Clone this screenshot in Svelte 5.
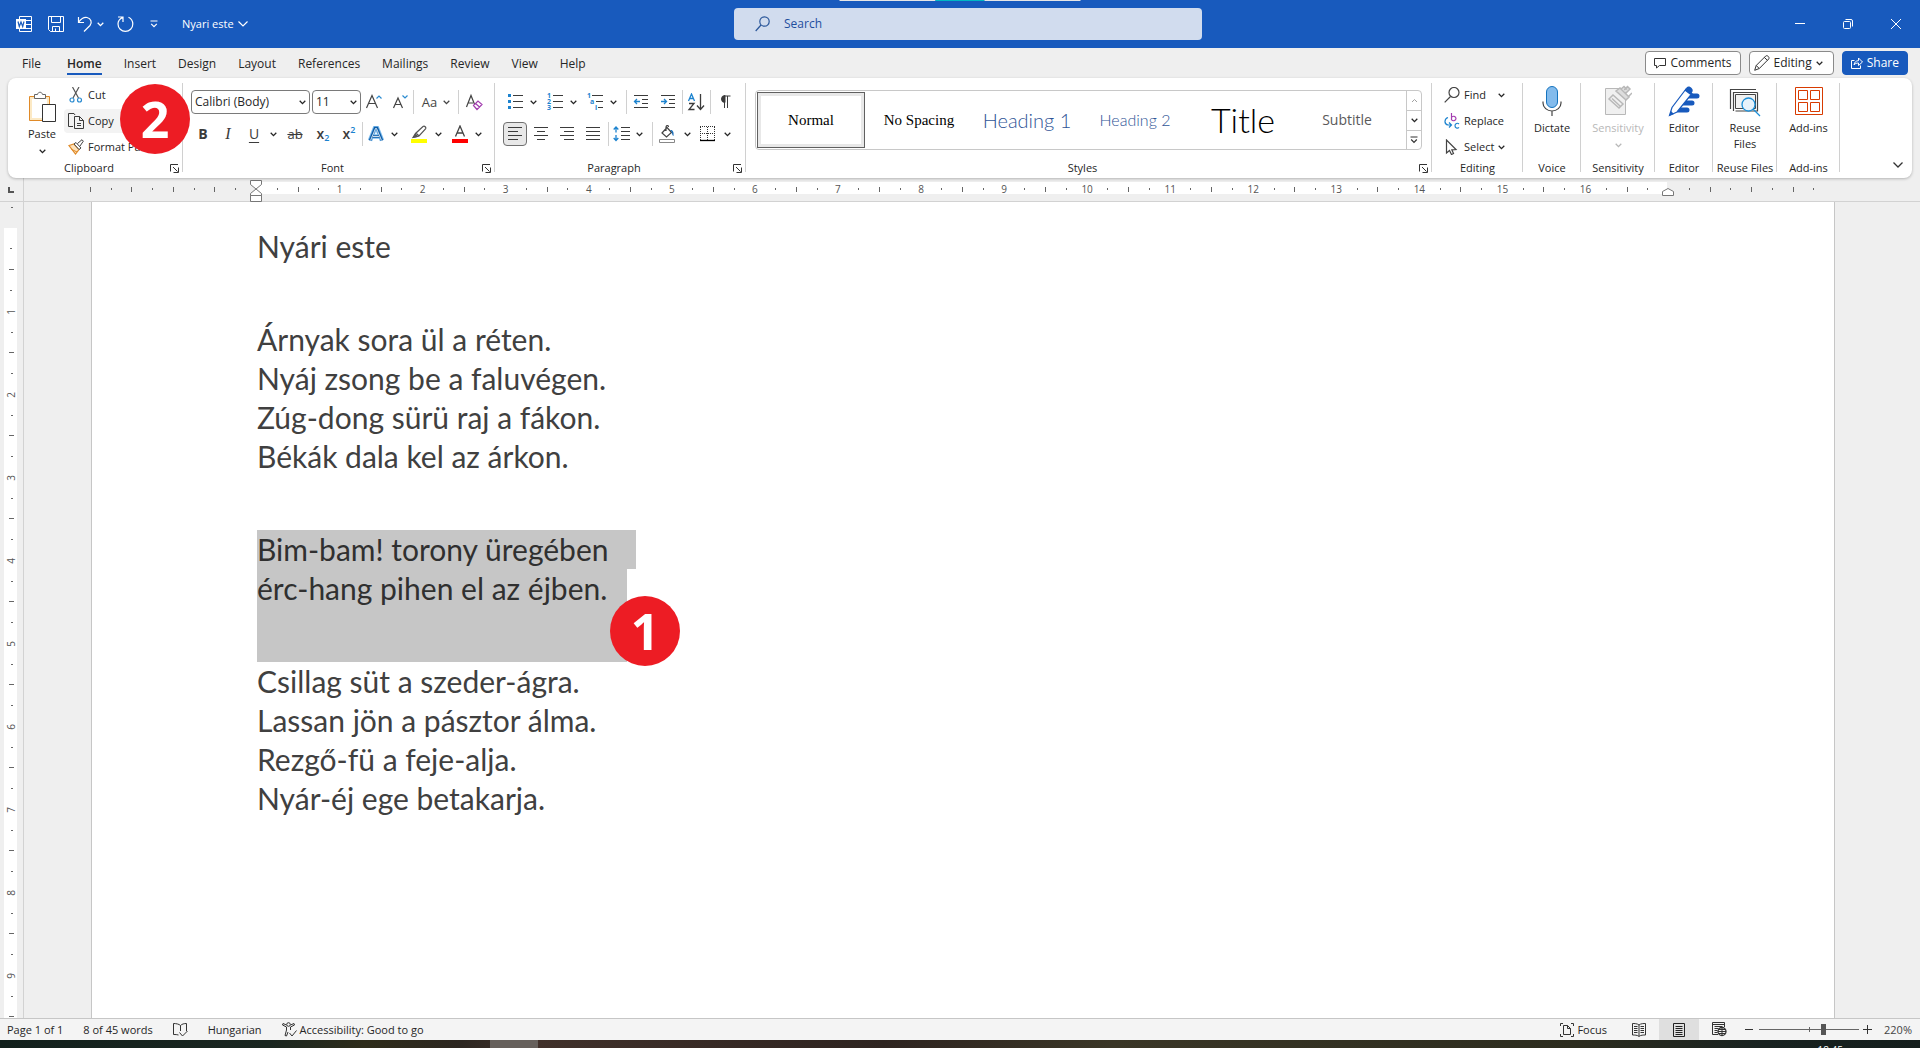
<script>
  const tabs = ['File', 'Home', 'Insert', 'Design', 'Layout', 'References', 'Mailings', 'Review', 'View', 'Help'];
  const styles = [
    { name: 'Normal', kind: 'serif' },
    { name: 'No Spacing', kind: 'serif' },
    { name: 'Heading 1', kind: 'h1' },
    { name: 'Heading 2', kind: 'h2' },
    { name: 'Title', kind: 'title' },
    { name: 'Subtitle', kind: 'subtitle' }
  ];
  // Quarter-unit marks of the horizontal ruler, zero being the left indent.
  const lastMark = 68;
  const marks = Array.from({ length: 84 }, (_, i) => i - 8);
  const units = Array.from({ length: 10 }, (_, i) => i);

  function markKind(k) {
    if (k === 0 || k === lastMark) return 'none';
    if (k % 4 === 0 && k > 0 && k < lastMark) return 'number';
    return k % 2 === 0 ? 'line' : 'dot';
  }

  const verse1 = ['Árnyak sora ül a réten.', 'Nyáj zsong be a faluvégen.', 'Zúg-dong sürü raj a fákon.', 'Békák dala kel az árkon.'];
  const verse3 = ['Csillag süt a szeder-ágra.', 'Lassan jön a pásztor álma.', 'Rezgő-fü a feje-alja.', 'Nyár-éj ege betakarja.'];

  let active = $state('Home');
  let picked = $state('Normal');
  let zoom = $state(65);
</script>

{#snippet caret()}
  <svg class="caret" width="7" height="5" viewBox="0 0 7 5"><path d="M.7 .8 3.5 3.6 6.3 .8" fill="none" stroke="currentColor" stroke-width="1.3" /></svg>
{/snippet}

{#snippet dropdown(label)}
  <button class="drop" aria-label={label}>{@render caret()}</button>
{/snippet}

{#snippet groupLabel(text, launcher)}
  <div class="group-label">
    <span>{text}</span>
    {#if launcher}
      <button class="launcher" aria-label="{text} settings">
        <svg width="9" height="9" viewBox="0 0 9 9" fill="none" stroke="#333"><path d="M.5 7.5V.5H8M3 3l4.5 4.5M8.5 3.5v5h-5" /></svg>
      </button>
    {/if}
  </div>
{/snippet}

{#snippet lines(widths, align)}
  <svg width="16" height="16" viewBox="0 0 16 16" stroke="#3b3b3b">
    {#each widths as w, i}
      {@const x = align === 'left' ? 1 : align === 'right' ? 15 - w : 8 - w / 2}
      <path d="M{x} {1.5 + i * 4}h{w}" />
    {/each}
  </svg>
{/snippet}

<div class="app">
  <header class="titlebar">
    <div class="screen-edge"><i></i><i class="teal"></i><i></i></div>
    <div class="quick">
      <svg class="word" width="16" height="16" viewBox="0 0 16 16" fill="none" stroke="#fff">
        <path d="M3.5 3V.5h12v15h-12V13M10 4.5h5.5M10 8.5h5.5M10 12.5h5.5" />
        <path d="M0 3h10v10H0z" fill="#fff" stroke="none" />
        <path d="M2 5.500l1.300 5L5 6l1.700 4.500L8 5.500" stroke="#185abd" stroke-width="1.200" />
      </svg>
      <button aria-label="Save">
        <svg width="16" height="16" viewBox="0 0 16 16" fill="none" stroke="#fff"><path d="M.5 .5h15v15H2.500L.5 13.500zM3.500 .5v6h9v-6M4.500 15.500v-5h7v5M7.500 12.500v3" /></svg>
      </button>
      <button class="undo" aria-label="Undo">
        <svg width="16" height="16" viewBox="0 0 16 16" fill="none" stroke="#fff" stroke-width="1.200"><path d="M1.500 1v5.500H7M1.800 6C4 3 7 1 10 1.500c4 .8 5.500 5 3 8L7 15.500" /></svg>
        {@render caret()}
      </button>
      <button aria-label="Redo">
        <svg width="17" height="16" viewBox="0 0 17 16" fill="none" stroke="#fff" stroke-width="1.200"><path d="M1 1h5v5M5.500 1.500C2.500 3 1 5 1 8a7.300 7.300 0 0 0 14.800 0c0-3-1.600-5.500-4.300-6.800" /></svg>
      </button>
      <button aria-label="Customize Quick Access Toolbar">
        <svg width="8" height="8" viewBox="0 0 8 8" fill="none" stroke="#fff" stroke-width="1.200"><path d="M.5 1h7M1.200 3.800 4 6.600l2.800-2.800" /></svg>
      </button>
    </div>
    <button class="doc-name">Nyari este
      <svg width="10" height="6" viewBox="0 0 10 6" fill="none" stroke="#fff" stroke-width="1.200"><path d="M.5 .5 5 5 9.500 .5" /></svg>
    </button>
    <label class="search">
      <svg width="15" height="16" viewBox="0 0 15 16" fill="none" stroke="#2b579a" stroke-width="1.200"><circle cx="9.500" cy="5.500" r="4.700" /><path d="M6 9 .7 15" /></svg>
      <input type="text" placeholder="Search" aria-label="Search" />
    </label>
    <div class="window-buttons">
      <button aria-label="Minimize"><svg width="10" height="10" viewBox="0 0 10 10" stroke="#fff"><path d="M0 4.500h10" /></svg></button>
      <button aria-label="Restore"><svg width="10" height="10" viewBox="0 0 10 10" fill="none" stroke="#fff"><rect x=".5" y="2.500" width="7" height="7" rx="1" /><path d="M2.500 .5H8A1.500 1.500 0 0 1 9.500 2v5.500" /></svg></button>
      <button aria-label="Close"><svg width="10" height="10" viewBox="0 0 10 10" stroke="#fff"><path d="M0 0l10 10M10 0 0 10" /></svg></button>
    </div>
  </header>

  <nav class="tabs">
    <div class="tab-list">
      {#each tabs as tab}
        <button class="tab" class:active={active === tab} onclick={() => (active = tab)}>{tab}</button>
      {/each}
    </div>
    <div class="actions">
      <button class="action">
        <svg width="12" height="12" viewBox="0 0 12 12" fill="none" stroke="#333"><path d="M.5 1.500h11v7h-6l-3 2.500v-2.500h-2z" /></svg>
        Comments
      </button>
      <button class="action">
        <svg width="16" height="16" viewBox="0 0 16 16" fill="none" stroke="#333"><path d="M.7 15.300 2.200 10.500 11.700 1c1.500-1.200 4.300 1.200 3 3L5.300 13.500zM2.200 10.500l3.100 3M10.300 2.400l3.200 3" /></svg>
        Editing {@render caret()}
      </button>
      <button class="action share">
        <svg width="12" height="12" viewBox="0 0 12 12" fill="none" stroke="#fff"><path d="M3.500 3.500h-3v8h9v-3M3 8c.5-3 2-4.300 4.500-4.300V1l4 4-4 3.500V6C5.500 6 4 6.500 3 8z" /></svg>
        Share
      </button>
    </div>
  </nav>

  <section class="ribbon" aria-label="Home ribbon">
    <div class="group clipboard">
      <div class="stack-row">
        <button class="big paste">
          <svg width="28" height="32" viewBox="0 0 28 32" fill="none">
            <path d="M1.500 5.500h20v24h-20z" fill="#fce9c4" stroke="#e08a28" />
            <path d="M4 8h15v19H4z" fill="#fff" />
            <path d="M6.500 7.500v-4h3c.5-3 4.500-3 5 0h3v4z" fill="#fff" stroke="#666" />
            <path d="M14.500 13.500h13v17h-13z" fill="#fff" stroke="#333" />
          </svg>
          <span>Paste</span>
          {@render caret()}
        </button>
        <div class="stack">
          <button class="small">
            <svg width="16" height="16" viewBox="0 0 16 16" fill="none"><path d="M4.500 0 10.500 11M11 0 5 11" stroke="#555" stroke-width="1.200" /><circle cx="4" cy="13" r="2" stroke="#2b8bd0" stroke-width="1.200" /><circle cx="11.500" cy="13" r="2" stroke="#2b8bd0" stroke-width="1.200" /></svg>
            Cut
          </button>
          <button class="small hovered">
            <svg width="16" height="16" viewBox="0 0 16 16" fill="none" stroke="#3b3b3b"><path d="M5 13.500H.5V.5H6L7 2M6.500 3.500h5l4 4v8h-9zM11.500 3.500v4h4M9 10.500h4M9 12.500h4" /></svg>
            Copy
          </button>
          <button class="small">
            <svg width="16" height="16" viewBox="0 0 16 16" fill="none"><path d="M1 6.500 6 5l5 5.500L7.500 15z" fill="#fde3bd" stroke="#e08a28" stroke-width="1.200" /><path d="M3 10l6 3" stroke="#e08a28" /><path d="M6 5l2-1.500L13 9l-2 1.500zM9.500 4.500 14 .7l1.300 1.500L12 7" fill="#fff" stroke="#444" /></svg>
            Format Painter
          </button>
        </div>
      </div>
      {@render groupLabel('Clipboard', true)}
      <span class="badge step-two">2</span>
    </div>

    <div class="group rows font-group">
      <div class="tool-row font-top">
        <label class="combo"><select aria-label="Font"><option>Calibri (Body)</option></select>{@render caret()}</label>
        <label class="combo size"><select aria-label="Font size"><option>11</option></select>{@render caret()}</label>
        <button aria-label="Increase font size"><svg width="18" height="18" viewBox="0 0 18 18" fill="none" stroke="#444" stroke-width="1.200"><path d="M1.500 15 7 2.500 12.500 15M3.500 10.500h7" /><path d="M11.500 5.500 14 3l2.500 2.500" stroke="#2b8bd0" /></svg></button>
        <button aria-label="Decrease font size"><svg width="18" height="18" viewBox="0 0 18 18" fill="none" stroke="#444" stroke-width="1.200"><path d="M2.500 15 7 5l4.500 10M4 11.500h6" /><path d="M11.500 2.500 14 5l2.500-2.500" stroke="#2b8bd0" /></svg></button>
        <span class="sep"></span>
        <button class="case" aria-label="Change case">Aa {@render caret()}</button>
        <span class="sep"></span>
        <button aria-label="Clear formatting"><svg width="18" height="18" viewBox="0 0 18 18" fill="none" stroke="#444" stroke-width="1.200"><path d="M1.500 14 6 2.500l4 10M3 10h5" /><path d="M8.500 12.500 13 8l4 3.500-5 5zM10.500 10.500l4 3.500" fill="#fff" stroke="#a33db0" /></svg></button>
      </div>
      <div class="tool-row font-bottom">
        <button class="glyph bold" aria-label="Bold">B</button>
        <button class="glyph italic" aria-label="Italic">I</button>
        <button class="glyph underline" aria-label="Underline">U</button>
        {@render dropdown('Underline style')}
        <button class="glyph strike" aria-label="Strikethrough">ab</button>
        <button class="glyph script" aria-label="Subscript">x<sub>2</sub></button>
        <button class="glyph script" aria-label="Superscript">x<sup>2</sup></button>
        <span class="sep"></span>
        <button aria-label="Text effects"><svg width="16" height="16" viewBox="0 0 16 16" fill="none"><path d="M2 14.500 7 2h2l5 12.500M4.500 10.500h7" stroke="#7cbcee" stroke-width="4.500" /><path d="M2 14.500 7 2h2l5 12.500M4.500 10.500h7" stroke="#0f5ea8" stroke-width="2.500" /><path d="M2.500 14.500 7.500 2.500h1l5 12M5 10.500h6" stroke="#fff" stroke-width=".8" /></svg></button>
        {@render dropdown('Text effect choices')}
        <button aria-label="Text highlight color"><svg width="16" height="18" viewBox="0 0 16 18" fill="none"><path d="M0 14h16v4H0z" fill="#ff0" /><path d="M2 12.500l2.500-4L12 1.500c1.500-1 3.500.8 2.500 2.300L8 11l-3 1zM5 8l3 3" stroke="#555" stroke-width="1.200" /><path d="M1.500 13 4.500 8.500 7.500 11.500z" fill="#555" /></svg></button>
        {@render dropdown('Highlight colors')}
        <button aria-label="Font color"><svg width="16" height="18" viewBox="0 0 16 18" fill="none"><path d="M0 14h16v4H0z" fill="red" /><path d="M3.500 11.500 8 1l4.500 10.500M5 8h6" stroke="#444" stroke-width="1.300" /></svg></button>
        {@render dropdown('Font colors')}
      </div>
      {@render groupLabel('Font', true)}
    </div>

    <div class="group rows paragraph-group">
      <div class="tool-row para-top">
        <button aria-label="Bullets"><svg width="16" height="16" viewBox="0 0 16 16"><path d="M1 0h3v3H1zM1 6h3v3H1zM1 12h3v3H1z" fill="#1c83cf" /><path d="M6 1.500h10M6 7.500h10M6 13.500h10" stroke="#3b3b3b" /></svg></button>
        {@render dropdown('Bullet library')}
        <button aria-label="Numbering"><svg width="16" height="20" viewBox="0 0 16 20"><path d="M6 3.500h10M6 9.500h10M6 15.500h10" stroke="#3b3b3b" /><g class="tiny"><text x="0" y="6">1</text><text x="0" y="12">2</text><text x="0" y="18">3</text></g></svg></button>
        {@render dropdown('Numbering library')}
        <button aria-label="Multilevel list"><svg width="16" height="20" viewBox="0 0 16 20"><path d="M5 3.500h11M9 9.500h7M11 15.500h5" stroke="#3b3b3b" /><g class="tiny"><text x="0" y="6">1</text><text x="3" y="12">a</text><text x="8" y="18">i</text></g></svg></button>
        {@render dropdown('Multilevel list library')}
        <span class="sep"></span>
        <button aria-label="Decrease indent"><svg width="16" height="16" viewBox="0 0 16 16" fill="none" stroke="#3b3b3b"><path d="M1 1.500h14M9 5.500h6M9 9.500h6M1 13.500h14" /><path d="M7 7.500H1.500M4 5 1.500 7.500 4 10" stroke="#1c83cf" stroke-width="1.300" /></svg></button>
        <button aria-label="Increase indent"><svg width="16" height="16" viewBox="0 0 16 16" fill="none" stroke="#3b3b3b"><path d="M1 1.500h14M9 5.500h6M9 9.500h6M1 13.500h14" /><path d="M1 7.500h5.500M4 5l2.500 2.500L4 10" stroke="#1c83cf" stroke-width="1.300" /></svg></button>
        <span class="sep"></span>
        <button aria-label="Sort"><svg width="18" height="18" viewBox="0 0 18 18" fill="none" stroke-width="1.300"><path d="M1.500 8 4.500 1l3 7M2.500 5.500h4" stroke="#1c83cf" /><path d="M2 10.500h5L2 16.500h5.500M13.500 1v15M10 12.500l3.500 4 3.500-4" stroke="#3b3b3b" /></svg></button>
        <span class="sep"></span>
        <button aria-label="Show formatting marks"><svg width="12" height="14" viewBox="0 0 12 14" fill="none" stroke="#3b3b3b"><path d="M5.500 13V1h6M8.500 13V1" /><path d="M6 .5a3.500 3.500 0 1 0 0 7z" fill="#3b3b3b" /></svg></button>
      </div>
      <div class="tool-row para-bottom">
        <button class="pressed" aria-label="Align left">{@render lines([14, 10, 14, 10], 'left')}</button>
        <button aria-label="Center">{@render lines([14, 8, 14, 8], 'center')}</button>
        <button aria-label="Align right">{@render lines([14, 10, 14, 10], 'right')}</button>
        <button aria-label="Justify">{@render lines([14, 14, 14, 14], 'left')}</button>
        <span class="sep"></span>
        <button aria-label="Line spacing"><svg width="17" height="16" viewBox="0 0 17 16" fill="none" stroke="#3b3b3b"><path d="M8 1.500h9M8 5.500h9M8 9.500h9M8 13.500h9" /><path d="M3 1v5.500M3 9v5.500M.7 3.500 3 1l2.300 2.500M.7 12 3 14.500 5.300 12" stroke="#1c83cf" stroke-width="1.300" /></svg></button>
        {@render dropdown('Line spacing choices')}
        <span class="sep"></span>
        <button aria-label="Shading"><svg width="16" height="18" viewBox="0 0 16 18" fill="none"><path d="M.5 14.500h15v3H.5z" stroke="#888" /><path d="M3 8 8 2.500l4.500 5L7.500 12zM7 6V2c.3-2 2.500-2 2.500 0" stroke="#444" stroke-width="1.200" /><path d="M11 5c3-.5 4 2 3.500 6-1.500 0-1-4-3.500-6z" fill="#1c6fb8" /></svg></button>
        {@render dropdown('Shading colors')}
        <button aria-label="Borders"><svg width="16" height="16" viewBox="0 0 16 16" fill="none" stroke="#333"><path d="M0 .5h15M.5 1v13M14.500 1v13M7.500 1v13M0 7.500h15" stroke-dasharray="1 1" /><path d="M0 14.500h15" stroke="#000" stroke-width="1.300" /></svg></button>
        {@render dropdown('Border choices')}
      </div>
      {@render groupLabel('Paragraph', true)}
    </div>

    <div class="group rows styles-group">
      <div class="gallery">
        <div class="gallery-items">
          {#each styles as style}
            <button class="style {style.kind}" class:picked={picked === style.name} onclick={() => (picked = style.name)}>{style.name}</button>
          {/each}
        </div>
        <div class="gallery-scroll">
          <button class="dim" aria-label="Previous styles"><svg width="7" height="5" viewBox="0 0 7 5"><path d="M1 4 3.500 1.500 6 4" fill="none" stroke="currentColor" /></svg></button>
          <button aria-label="Next styles">{@render caret()}</button>
          <button aria-label="More styles"><svg width="8" height="8" viewBox="0 0 8 8" fill="none" stroke="#333" stroke-width="1.200"><path d="M.5 1h7M1.200 3.500 4 6.300l2.800-2.800" /></svg></button>
        </div>
      </div>
      {@render groupLabel('Styles', true)}
    </div>

    <div class="group editing-group">
      <div class="stack">
        <button class="small">
          <svg width="16" height="16" viewBox="0 0 16 16" fill="none" stroke="#444" stroke-width="1.200"><circle cx="10" cy="5.500" r="5" /><path d="M6.500 9.500 .7 15.300" /></svg>
          Find <span class="far">{@render caret()}</span>
        </button>
        <button class="small">
          <svg width="16" height="16" viewBox="0 0 16 16" fill="none" stroke-width="1.200"><path d="M7.500 0v7M7.500 4.500c1-2 4.500-1.500 4.500 1s-3.500 3-4.500 1" stroke="#a33db0" /><path d="M15 11c-1.500-1.500-4-.5-4 1.700s2.500 3.200 4 1.700M4 4.500C.5 5.500-.5 11 4 12h3M5 9.500 7.500 12 5 14.500" stroke="#1c83cf" /></svg>
          Replace
        </button>
        <button class="small">
          <svg width="16" height="16" viewBox="0 0 16 16" fill="none" stroke="#444" stroke-width="1.200"><path d="M2.500 1v13l3-2.500 2 4 2-1-1.700-3.700 4.200-.3z" /></svg>
          Select {@render caret()}
        </button>
      </div>
      {@render groupLabel('Editing', false)}
    </div>

    <div class="group voice-group">
      <button class="big">
        <svg width="20" height="32" viewBox="0 0 20 32" fill="none"><rect x="4.500" y="1.500" width="11" height="21" rx="5.500" fill="#83bbec" stroke="#1573be" /><path d="M1 16.500v1.500a9 8 0 0 0 18 0v-1.500M10 26v5" stroke="#444" stroke-width="1.200" /></svg>
        <span>Dictate</span>
      </button>
      {@render groupLabel('Voice', false)}
    </div>

    <div class="group sensitivity-group">
      <button class="big" disabled>
        <svg width="28" height="32" viewBox="0 0 28 32" fill="none" stroke="#b8b8b8"><path d="M1.500 3.500h20v26h-20z" fill="#f0f0f0" /><path d="M5 14l4-4 10 9-4 4zM8 13.500l8 7.500" fill="#f0f0f0" stroke-width="1.500" /><path d="M12 6l4-3 9 9-3 3zM17 4l3-2.500 3 3M22 8l4-4-2.500-2.500L20 5M25 11l3-3" fill="#ddd" stroke-width="1.500" /></svg>
        <span>Sensitivity</span>
        {@render caret()}
      </button>
      {@render groupLabel('Sensitivity', false)}
    </div>

    <div class="group editor-group">
      <button class="big">
        <svg width="32" height="32" viewBox="0 0 32 32" fill="none"><path d="M18 11h11M14 18h10M10 25h9" stroke="#185abd" stroke-width="5" stroke-linecap="round" /><path d="M1.500 30.500 4 22.500 18 4l6 4.500L9 27z" fill="#fff" stroke="#185abd" stroke-width="1.200" /><path d="M16.500 5.500 19 2c2-2 7 1.500 5.500 4.500L22.500 10zM1 31l2-5 3 3z" fill="#185abd" /></svg>
        <span>Editor</span>
      </button>
      {@render groupLabel('Editor', false)}
    </div>

    <div class="group reuse-group">
      <button class="big">
        <svg width="32" height="32" viewBox="0 0 32 32" fill="none" stroke="#444"><path d="M1.500 24V4.500H27M4.500 26V7.500h24M28.500 7.500V26H6.500" stroke-width="1.200" /><path d="M6.500 9.500h20v14h-20z" fill="#f2f2f2" /><circle cx="19.500" cy="19.500" r="6.500" fill="#e6f2fb" stroke="#1c8fd8" stroke-width="1.300" /><path d="M24 24l7 7" stroke="#1c8fd8" stroke-width="1.300" /></svg>
        <span>Reuse<br />Files</span>
      </button>
      {@render groupLabel('Reuse Files', false)}
    </div>

    <div class="group addins-group">
      <button class="big">
        <svg width="28" height="32" viewBox="0 0 28 32" fill="none" stroke="#d83b01"><path d="M.5 2.500h27v27H.5zM3.500 5.500h9v9h-9zM15.500 5.500h9v9h-9zM3.500 17.500h9v9h-9zM15.500 17.500h9v9h-9z" /></svg>
        <span>Add-ins</span>
      </button>
      {@render groupLabel('Add-ins', false)}
    </div>

    <div class="ribbon-end">
      <button aria-label="Collapse ribbon"><svg width="10" height="6" viewBox="0 0 10 6" fill="none" stroke="#333" stroke-width="1.300"><path d="M.5 .5 5 5 9.500 .5" /></svg></button>
    </div>
  </section>

  <div class="ruler">
    <div class="corner"><i></i></div>
    <div class="ruler-body">
      <div class="ruler-strip"></div>
      <div class="marks">
        {#each marks as k}
          <div class="mark">
            {#if markKind(k) === 'number'}<span>{k / 4}</span>{:else}<i class={markKind(k)}></i>{/if}
            {#if k === 0}
              <svg class="indent" width="12" height="22" viewBox="0 0 12 22" fill="#fff" stroke="#777"><path d="M.5 .5h11v4L6 9 .5 4.500zM.5 15.500v-2L6 9l5.500 4.500v2zM.5 15.500h11v6H.5z" /></svg>
            {/if}
            {#if k === lastMark}
              <svg class="indent" width="12" height="22" viewBox="0 0 12 22" fill="#fff" stroke="#777"><path d="M.5 15.500v-4L6 8.500l5.500 3v4z" /></svg>
            {/if}
          </div>
        {/each}
      </div>
    </div>
  </div>

  <main class="workspace">
    <div class="v-ruler">
      <div class="v-lead"><i class="dot"></i></div>
      <div class="v-strip">
        {#each units as u}
          <div class="v-unit">
            <div>{#if u > 0}<span>{u}</span>{/if}</div>
            <div><i class="dot"></i></div>
            <div><i class="line"></i></div>
            <div><i class="dot"></i></div>
          </div>
        {/each}
      </div>
    </div>
    <div class="canvas">
      <article class="page">
        <p>Nyári este</p>
        <p>{#each verse1 as line}<span>{line}</span>{/each}</p>
        <div class="selection">
          <p><span class="sel first">Bim-bam! torony üregében</span><span class="sel last">érc-hang pihen el az éjben.</span></p>
          <span class="badge step-one">1</span>
        </div>
        <p>{#each verse3 as line}<span>{line}</span>{/each}</p>
      </article>
    </div>
  </main>

  <footer class="status">
    <div class="status-left">
      <button>Page 1 of 1</button>
      <button>8 of 45 words</button>
      <button aria-label="Proofing"><svg width="15" height="14" viewBox="0 0 15 14" fill="none" stroke="#333"><path d="M7.500 2.500C6 1 3 .5 .5 .5v11c2 0 3.500 0 5 .5M7.500 8V2.500C9 1 11 .5 13.500 .5V8M6.500 9.500l3 3.500 5-5" /></svg></button>
      <button>Hungarian</button>
      <button class="access"><svg width="15" height="15" viewBox="0 0 15 15" fill="none" stroke="#333"><circle cx="6.500" cy="2.500" r="1.800" /><path d="M4.500 3 1 1.500 .5 3l4 2v3l-1.500 5.500 1.500.5L6 10M8.500 3 12 1.500l.5 1.500-4 2v3M7.500 11l2.500 3 4.500-5.500" /></svg>Accessibility: Good to go</button>
    </div>
    <div class="status-right">
      <button class="focus"><svg width="14" height="14" viewBox="0 0 14 14" fill="none" stroke="#333"><path d="M.5 3V.5H3M11 .5h2.500V3M.5 11v2.500H3M13.500 11v2.500H11M3.500 2.500h4l3 3v6h-7zM7.500 2.500v3h3" /></svg>Focus</button>
      <button class="view" aria-label="Read mode"><svg width="14" height="14" viewBox="0 0 14 14" fill="none" stroke="#333"><path d="M7 2C5.500.5 2 .5 .5 .5v11.500c2 0 5 0 6.500 1.500C8.500 12 11.500 12 13.500 12V.5C12 .5 8.500 .5 7 2zV13M2 3.500h3.500M2 5.500h3.500M2 7.500h3.500M2 9.500h3.500M8.500 3.500H12M8.500 5.500H12M8.500 7.500H12M8.500 9.500H12" /></svg></button>
      <button class="view current" aria-label="Print layout"><svg width="12" height="14" viewBox="0 0 12 14" fill="none" stroke="#222"><path d="M.5 .5h11v13H.5zM2.500 3.500h7M2.500 5.500h7M2.500 7.500h7M2.500 9.500h7M2.500 11.500h7" /></svg></button>
      <button class="view" aria-label="Web layout"><svg width="15" height="15" viewBox="0 0 15 15" fill="none" stroke="#333"><path d="M6 12.500H.5V.5h12V5M.5 2.500h12M2.500 4.500h8M2.500 6.500h4M2.500 8.500h3M2.500 10.500h3" /><circle cx="10" cy="9.500" r="4" stroke-width="1.300" /><path d="M6 9.500h8M10 5.500v8M7 7.500h6M7 11.500h6" /></svg></button>
      <button class="step" aria-label="Zoom out"><svg width="8" height="9" viewBox="0 0 8 9" stroke="#333"><path d="M0 4.500h8" /></svg></button>
      <input type="range" min="0" max="100" bind:value={zoom} aria-label="Zoom" />
      <button class="step" aria-label="Zoom in"><svg width="9" height="9" viewBox="0 0 9 9" stroke="#333"><path d="M0 4.500h9M4.500 0v9" /></svg></button>
      <button class="percent">220%</button>
    </div>
  </footer>
  <div class="taskbar"><span class="task"></span><span class="clock">18:45</span></div>
</div>

<style>
  :global(body) { margin: 0; }
  .app {
    display: flex;
    flex-direction: column;
    height: 100vh;
    overflow: hidden;
    background: #efefef;
    color: #262626;
    font: 12px/16px "Open Sans", "Noto Sans", sans-serif;
  }
  button {
    display: flex;
    align-items: center;
    justify-content: center;
    margin: 0;
    padding: 0;
    border: 0;
    background: none;
    color: inherit;
    font: inherit;
    white-space: nowrap;
  }
  svg { display: block; flex: none; }
  p { margin: 0; }

  .titlebar {
    position: relative;
    display: grid;
    grid-template-columns: 1fr 468px 1fr;
    grid-template-areas: "left search right";
    align-items: center;
    height: 48px;
    flex: none;
    padding-left: 16px;
    background: #185abd;
    color: #fff;
  }
  .screen-edge {
    position: absolute;
    top: 0;
    left: 50%;
    display: flex;
    width: 241px;
    height: 1px;
    transform: translateX(-50%);
  }
  .screen-edge i { flex: 2; background: #e6e6e6; }
  .screen-edge .teal { flex: 1; background: #00b7c3; }
  .quick {
    grid-area: left;
    display: flex;
    align-items: center;
    gap: 16px;
  }
  .undo { gap: 4px; margin: 0 -3px; }
  .doc-name {
    grid-area: left;
    justify-self: start;
    gap: 4px;
    margin-left: 166px;
    font-size: 11px;
  }
  .search {
    grid-area: search;
    display: flex;
    align-items: center;
    gap: 14px;
    height: 32px;
    padding-left: 21px;
    border-radius: 4px;
    background: #d1dcee;
    box-sizing: border-box;
  }
  .search input {
    flex: 1;
    padding: 0;
    border: 0;
    outline: 0;
    background: none;
    font: inherit;
  }
  .search input::placeholder { color: #1f4e9e; opacity: 1; }
  .window-buttons {
    grid-area: right;
    display: flex;
    justify-self: end;
  }
  .window-buttons button { width: 48px; height: 48px; }

  .tabs {
    display: flex;
    justify-content: space-between;
    height: 30px;
    flex: none;
    padding: 0 12px 0 22px;
  }
  .tab-list { display: flex; gap: 22px; }
  .tab {
    height: 27px;
    padding-top: 6px;
    border-bottom: 2px solid transparent;
  }
  .tab:first-child { margin-right: 4px; }
  .tab.active { border-color: #185abd; font-weight: 600; }
  .actions { display: flex; gap: 8px; padding-top: 3px; }
  .action {
    gap: 4px;
    height: 24px;
    padding: 0 8px;
    border: 1px solid #8a8a8a;
    border-radius: 4px;
    background: #fff;
  }
  .action:nth-child(2) { padding: 0 10px 0 4px; }
  .share { border-color: #185abd; background: #185abd; color: #fff; }

  .ribbon {
    position: relative;
    z-index: 1;
    display: flex;
    height: 100px;
    flex: none;
    margin: 0 8px;
    border-radius: 8px;
    background: #fff;
    box-shadow: 0 1px 3px rgba(0, 0, 0, .25);
    font-size: 11px;
  }
  .group {
    position: relative;
    box-sizing: border-box;
    display: flex;
    flex-direction: column;
    justify-content: space-between;
    flex: none;
    padding: 5px 0 1px;
    background: linear-gradient(#d0d0d0, #d0d0d0) right 5px / 1px 89px no-repeat;
  }
  .clipboard { width: 175px; }
  .font-group { width: 312px; padding-left: 8px; }
  .paragraph-group { width: 251px; padding-left: 8px; }
  .styles-group { flex: 1; min-width: 0; padding-left: 8px; }
  .editing-group { width: 91px; }
  .voice-group, .editor-group { width: 58px; }
  .sensitivity-group { width: 74px; }
  .reuse-group { width: 64px; }
  .addins-group { width: 63px; }
  .rows { padding-top: 12px; justify-content: flex-start; gap: 8px; }
  .group-label {
    display: flex;
    align-items: center;
    height: 18px;
    margin-top: auto;
  }
  .rows .group-label { margin-left: -8px; }
  .group-label span { flex: 1; text-align: center; white-space: nowrap; }
  .launcher { width: 13px; justify-content: flex-start; }

  .stack-row { display: flex; }
  .stack { display: flex; flex-direction: column; gap: 2px; }
  .clipboard .stack { flex: 1; }
  .small {
    justify-content: flex-start;
    gap: 4px;
    height: 24px;
    padding-left: 4px;
    border-radius: 4px;
  }
  .hovered { background: #f3f3f3; }
  .editing-group .stack { padding-left: 8px; }
  .far { padding-left: 8px; }
  .big {
    flex-direction: column;
    gap: 3px;
    width: 100%;
    padding-top: 2px;
  }
  .big:disabled { color: #b8b8b8; }
  .paste { width: 56px; padding-left: 12px; }
  .big .caret { margin-top: 4px; }

  .badge {
    position: absolute;
    z-index: 2;
    display: flex;
    align-items: center;
    justify-content: center;
    width: 70px;
    height: 70px;
    border-radius: 50%;
    background: #ed1c24;
    color: #fff;
    font: 700 50px/70px "Open Sans", sans-serif;
  }
  .step-two { left: 112px; top: 6px; }
  .step-one { left: 353px; top: 66px; }

  .tool-row { display: grid; height: 24px; align-items: center; }
  .tool-row > button { height: 24px; }
  .font-top { grid-template-columns: 119px 51px 26px 26px 1px 44px 1px 30px; }
  .font-bottom { grid-template-columns: 24px 26px 26px 14px 28px 28px 24px 3px 24px 18px 26px 16px 24px 16px; }
  .para-top { grid-template-columns: 24px 16px 24px 16px 24px 18px 2px 28px 26px 2px 26px 2px 28px; }
  .para-bottom { grid-template-columns: 24px 28px 24px 28px 2px 24px 18px 2px 28px 14px 26px 16px; }
  .sep { justify-self: center; width: 1px; height: 24px; background: #d0d0d0; }
  .tool-row .drop { justify-content: flex-start; padding-left: 3px; }
  .pressed {
    border: 1px solid #707070;
    border-radius: 4px;
    background: #e8e8e8;
  }
  .combo {
    box-sizing: border-box;
    display: flex;
    align-items: center;
    height: 24px;
    padding: 0 3px;
    border: 1px solid #7a7a7a;
    border-radius: 4px;
    background: #fff;
  }
  .size { margin-left: 2px; }
  select {
    flex: 1;
    min-width: 0;
    padding: 0;
    border: 0;
    appearance: none;
    background: none;
    color: #262626;
    font: 12px/16px "Open Sans", sans-serif;
  }
  .case { gap: 6px; color: #444; font-size: 13px; }
  .glyph { color: #3b3b3b; font-size: 14px; }
  .bold { font-weight: 700; }
  .italic { font-family: "Liberation Serif", serif; font-style: italic; font-size: 16px; }
  .underline { text-decoration: underline; text-underline-offset: 3px; }
  .strike { text-decoration: line-through; font-size: 13px; }
  .script { font-weight: 600; }
  .script sub, .script sup { color: #1c83cf; font-size: 9px; line-height: 16px; }
  .script sub { align-self: flex-end; }
  .script sup { align-self: flex-start; }
  .tiny { fill: #1c83cf; font: 700 7px "Open Sans", sans-serif; }

  .gallery {
    box-sizing: border-box;
    display: flex;
    height: 60px;
    margin: 0 10px 0 1px;
    border: 1px solid #c8c8c8;
    border-radius: 4px;
  }
  .gallery-items { display: flex; flex: 1; min-width: 0; overflow: hidden; padding: 1px; }
  .style { box-sizing: border-box; width: 108px; flex: none; }
  .picked { border: 1px solid #606060; box-shadow: inset 0 0 0 3px #e8e8e8; }
  .serif { color: #000; font: 15px/20px "Liberation Serif", serif; }
  .h1 { color: #2f5496; font: 300 20px/24px Lato, sans-serif; }
  .h2 { color: #2f5496; font: 300 16px/20px Lato, sans-serif; }
  .title { color: #000; font: 300 34px/40px Lato, sans-serif; }
  .subtitle { width: 100px; color: #5a5a5a; font: 14px/16px "Open Sans", sans-serif; }
  .gallery-scroll { display: grid; grid-template-rows: 1fr 1fr 1fr; width: 15px; }
  .gallery-scroll button { border-left: 1px solid #c8c8c8; }
  .gallery-scroll button + button { border-top: 1px solid #c8c8c8; }
  .dim { color: #a0a0a0; }
  .ribbon-end {
    display: flex;
    align-items: flex-end;
    justify-content: flex-end;
    width: 72px;
    padding: 0 9px 10px 0;
    box-sizing: border-box;
  }

  .ruler {
    display: flex;
    height: 23px;
    flex: none;
    border-bottom: 1px solid #d2d2d2;
  }
  .corner {
    box-sizing: border-box;
    width: 24px;
    padding: 9px 0 0 8px;
    border-right: 1px solid #d2d2d2;
  }
  .corner i {
    display: block;
    width: 4px;
    height: 4px;
    border: solid #555;
    border-width: 0 0 2px 2px;
  }
  .ruler-body { display: grid; flex: 1; }
  .ruler-strip {
    grid-area: 1 / 1;
    height: 12px;
    margin: 4px 253px 0 233px;
    background: #fff;
  }
  .marks {
    grid-area: 1 / 1;
    display: flex;
    height: 22px;
    padding: 0 96px 0 56px;
    color: #555;
    font-size: 10px;
  }
  .mark {
    position: relative;
    display: flex;
    align-items: center;
    justify-content: center;
    flex: 1;
    min-width: 0;
  }
  .mark .line { width: 1px; height: 5px; background: #666; }
  .mark .dot { width: 1px; height: 2px; background: #666; }
  .indent { position: absolute; top: 2px; left: 4px; }

  .workspace { display: flex; flex: 1; min-height: 0; overflow: hidden; }
  .v-ruler {
    box-sizing: border-box;
    width: 24px;
    flex: none;
    border-right: 1px solid #d2d2d2;
    overflow: hidden;
    color: #555;
    font-size: 10px;
  }
  .v-lead, .v-unit div {
    display: flex;
    align-items: center;
    justify-content: center;
  }
  .v-lead { height: 10px; padding: 0 5px 16px; }
  .v-strip { margin: 0 6px 0 4px; padding-left: 1px; background: #fff; }
  .v-unit { display: grid; grid-template-rows: repeat(4, 1fr); height: 83px; }
  .v-unit:first-child { height: 73px; grid-template-rows: 10px 1fr 1fr 1fr; }
  .v-unit span { writing-mode: vertical-rl; transform: rotate(180deg); line-height: 13px; }
  .v-ruler .line { width: 5px; height: 1px; background: #666; }
  .v-ruler .dot { width: 2px; height: 1px; background: #666; }

  .canvas { display: flex; flex: 1; padding: 0 85px 0 67px; }
  .page {
    box-sizing: border-box;
    display: flex;
    flex-direction: column;
    gap: 54px;
    flex: 1;
    padding: 25px 165px 0;
    border: solid #c6c6c6;
    border-width: 0 1px;
    background: #fff;
    color: #404040;
    font: 30px/39px Lato, "Open Sans", sans-serif;
  }
  .page p span { display: block; }
  .selection { position: relative; height: 78px; }
  .selection .sel { width: fit-content; background: #c6c6c6; color: #303030; }
  .selection .first { padding-right: 28px; }
  .selection .last { padding: 0 20px 54px 0; }

  .status {
    display: flex;
    justify-content: space-between;
    height: 21px;
    flex: none;
    border-top: 1px solid #c6c6c6;
    background: #f4f4f4;
    font-size: 11px;
  }
  .status-left, .status-right { display: flex; align-items: stretch; }
  .status-left { gap: 20px; padding-left: 7px; }
  .access, .focus { gap: 3px; }
  .focus { margin-right: 12px; }
  .view { width: 40px; }
  .current { background: #dfdfdf; }
  .step { width: 14px; }
  .status-right .view + .step { margin-left: 3px; }
  input[type="range"] {
    width: 100px;
    margin: 0 1px 0 3px;
    appearance: none;
    background:
      linear-gradient(#666, #666) center / 1px 5px no-repeat,
      linear-gradient(#666, #666) center / 100% 1px no-repeat;
  }
  input[type="range"]::-webkit-slider-thumb {
    appearance: none;
    width: 5px;
    height: 11px;
    background: #555;
  }
  .percent { width: 46px; justify-content: flex-end; padding-right: 8px; color: #444; }

  .taskbar {
    display: flex;
    justify-content: space-between;
    height: 8px;
    flex: none;
    overflow: hidden;
    background: linear-gradient(90deg, #12201c 0%, #1a2620 14%, #2e2c1a 19%, #2c2620 24%, #40302a 28%, #2e2420 46%, #3a3626 58%, #2c2c1e 82%, #182220 92%, #141e1c);
    font-size: 10px;
  }
  .task { width: 48px; margin-left: 490px; background: #66605c; }
  .clock { margin-right: 77px; padding-top: 2px; color: #fff; }
</style>
